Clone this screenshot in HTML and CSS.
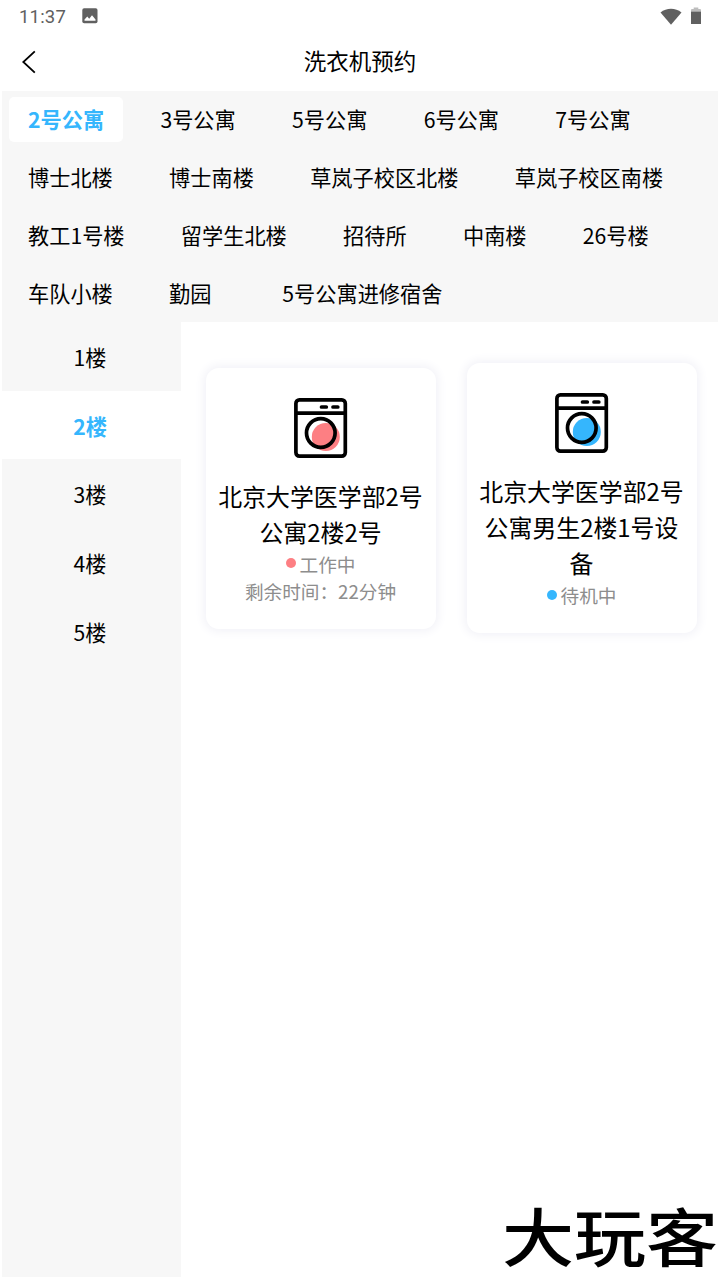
FILE: index.html
```html
<!DOCTYPE html>
<html lang="zh-CN">
<head>
    <meta charset="UTF-8">
    <meta name="viewport" content="width=device-width, initial-scale=1.0">
    <title>洗衣机预约</title>
    <link rel="stylesheet" href="styles.css">
</head>
<body>

    <!-- Status bar -->
    <div class="status-bar">
        <span class="time">11:37</span>
        <svg class="picture-icon" width="16" height="16" viewBox="0 0 16 16">
            <rect x="0.3" y="0.3" width="15.2" height="15" rx="1.8" fill="#606060"/>
            <path d="M2.5 12.8V11.6L5.3 8.6L7.2 10.8L10 7.2L13.5 11.6V12.8Z" fill="#fff"/>
        </svg>
        <svg class="wifi-icon" width="22" height="17" viewBox="0 0 22 17">
            <path d="M0.5 4.4C6.5 -0.6 15.5 -0.6 21.5 4.4L11 16.8Z" fill="#606060"/>
        </svg>
        <svg class="battery-icon" width="10" height="18" viewBox="0 0 10 18">
            <path d="M0 5V3Q0 2 1 2H2.7V0.5H7.3V2H9Q10 2 10 3V5Z" fill="#bdbdbd"/>
            <path d="M0 4.7H10V17H0Z" fill="#606060"/>
        </svg>
    </div>

    <header class="header">
        <svg class="back" width="14" height="24" viewBox="0 0 14 24">
            <path d="M12.8 1.3L1.3 12L12.8 22.7" fill="none" stroke="#000" stroke-width="1.8"/>
        </svg>
        <h1>洗衣机预约</h1>
    </header>

    <!-- Buildings -->
    <nav class="buildings">
        <span class="building active">2号公寓</span>
        <span class="building">3号公寓</span>
        <span class="building">5号公寓</span>
        <span class="building">6号公寓</span>
        <span class="building">7号公寓</span>
        <span class="building">博士北楼</span>
        <span class="building">博士南楼</span>
        <span class="building">草岚子校区北楼</span>
        <span class="building">草岚子校区南楼</span>
        <span class="building">教工1号楼</span>
        <span class="building">留学生北楼</span>
        <span class="building">招待所</span>
        <span class="building">中南楼</span>
        <span class="building">26号楼</span>
        <span class="building">车队小楼</span>
        <span class="building">勤园</span>
        <span class="building">5号公寓进修宿舍</span>
    </nav>

    <div class="content">
        <!-- Floors -->
        <aside class="floors">
            <div class="floor">1楼</div>
            <div class="floor active">2楼</div>
            <div class="floor">3楼</div>
            <div class="floor">4楼</div>
            <div class="floor">5楼</div>
        </aside>

        <!-- Machines -->
        <main class="machines">
            <div class="card working">
                <svg class="washer" width="54" height="60" viewBox="0 0 54 60">
                    <circle class="drum" cx="31.8" cy="39" r="14"/>
                    <rect x="1.9" y="1.9" width="49.4" height="56.2" rx="3.5"/>
                    <path d="M2 15.2H51"/>
                    <path d="M27.5 9H32.3M39 9H43.8" stroke-linecap="round"/>
                    <circle cx="26.8" cy="35" r="14.3"/>
                </svg>
                <div class="name">北京大学医学部2号公寓2楼2号</div>
                <div class="state"><span class="dot"></span>工作中</div>
                <div class="state">剩余时间：22分钟</div>
            </div>
            <div class="card idle">
                <svg class="washer" width="54" height="60" viewBox="0 0 54 60">
                    <circle class="drum" cx="31.8" cy="39" r="14"/>
                    <rect x="1.9" y="1.9" width="49.4" height="56.2" rx="3.5"/>
                    <path d="M2 15.2H51"/>
                    <path d="M27.5 9H32.3M39 9H43.8" stroke-linecap="round"/>
                    <circle cx="26.8" cy="35" r="14.3"/>
                </svg>
                <div class="name">北京大学医学部2号公寓男生2楼1号设备</div>
                <div class="state"><span class="dot"></span>待机中</div>
            </div>
        </main>
    </div>

    <div class="watermark">大玩客</div>

</body>
</html>
```
FILE: styles.css
```css
* {
    box-sizing: border-box;
}

body {
    margin: 0;
    height: 1280px;
    display: flex;
    flex-direction: column;
    overflow: hidden;
    background-color: #fff;
    color: #000;
    font-family: "Noto Sans CJK SC", sans-serif;
}

svg {
    display: block;
    flex: none;
}

/* Status bar */
.status-bar {
    display: flex;
    align-items: center;
    height: 32px;
    padding: 0 19px;
}

.time {
    width: 63px;
    font-family: Roboto, sans-serif;
    font-size: 18.5px;
    letter-spacing: 0.2px;
    line-height: 32px;
    padding-top: 2px;
    color: #606060;
}

.wifi-icon {
    margin-left: auto;
    margin-right: 9px;
}

/* Header */
.header {
    display: grid;
    grid-template-columns: 50px 1fr 50px;
    align-items: center;
    height: 59px;
}

.back {
    margin: 0 0 0 22px;
}

h1 {
    margin: 0;
    font-size: 22.5px;
    font-weight: 400;
    line-height: 57px;
    padding-bottom: 2px;
    text-align: center;
}

/* Buildings */
.buildings {
    display: flex;
    flex-wrap: wrap;
    align-content: flex-start;
    gap: 13px 18.3px;
    height: 231px;
    margin: 0 2px;
    padding: 6px 7px;
    background-color: #f7f7f7;
}

.building {
    min-width: 95px;
    height: 45px;
    padding: 0 19px;
    border-radius: 5px;
    font-size: 21.2px;
    line-height: 44px;
    white-space: nowrap;
}

.building.active,
.floor.active {
    background-color: #fff;
    color: #35b6fd;
    font-weight: 700;
}

/* Floors */
.content {
    display: flex;
    flex: 1;
}

.floors {
    width: 179px;
    margin: 0 0 3px 2px;
    background-color: #f7f7f7;
}

.floor {
    height: 68.7px;
    padding-right: 3px;
    font-size: 21.15px;
    line-height: 69px;
    text-align: center;
}

.floor.active {
    margin-left: -2px;
    padding-left: 2px;
}

/* Machines */
.machines {
    flex: 1;
    display: flex;
    align-items: center;
    gap: 31px;
    height: 352px;
    padding: 0 0 0 25px;
}

.card {
    display: flex;
    flex-direction: column;
    align-items: center;
    width: 230px;
    padding: 30px 13px 24px 12px;
    border-radius: 13px;
    box-shadow: 0 0 10px 3px #f3f3f8;
    text-align: center;
}

.washer {
    margin-bottom: 20px;
    fill: none;
    stroke: #000;
    stroke-width: 3.7;
}

.drum {
    stroke: none;
}

.working .drum {
    fill: #fd7f83;
}

.idle .drum {
    fill: #35b6fd;
}

.name {
    font-size: 23.9px;
    line-height: 36px;
}

.state {
    display: flex;
    align-items: center;
    font-size: 18.65px;
    line-height: 27.5px;
    color: #8d8d8d;
}

.dot {
    width: 10px;
    height: 10px;
    margin-right: 4px;
    border-radius: 50%;
}

.working .dot {
    background-color: #fd7f83;
}

.idle .dot {
    background-color: #35b6fd;
}

/* Watermark lies over the page corner */
.watermark {
    position: absolute;
    right: 2px;
    bottom: 2px;
    font-size: 72px;
    font-weight: 500;
    line-height: 100px;
    transform: scaleY(0.87);
    transform-origin: bottom;
}
```
